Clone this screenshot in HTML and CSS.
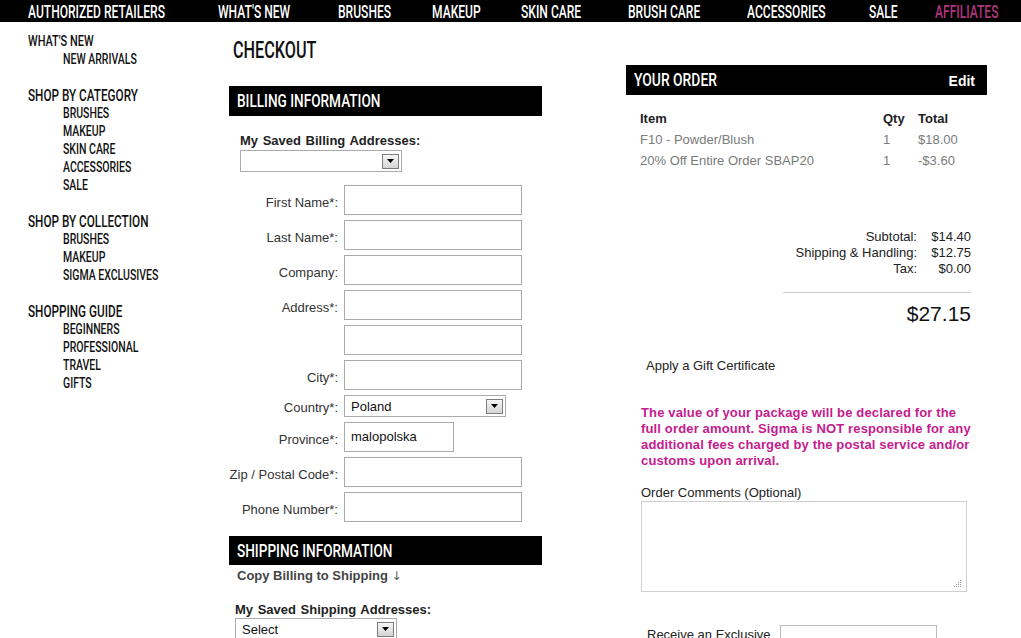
FILE: index.html
```html
<!DOCTYPE html>
<html>
<head>
<meta charset="utf-8">
<title>Checkout</title>
<link rel="stylesheet" href="styles.css">
</head>
<body>
<nav class="nav">
  <a class="nav-item"><span class="c">AUTHORIZED RETAILERS</span></a>
  <a class="nav-item"><span class="c">WHAT'S NEW</span></a>
  <a class="nav-item"><span class="c">BRUSHES</span></a>
  <a class="nav-item"><span class="c">MAKEUP</span></a>
  <a class="nav-item"><span class="c">SKIN CARE</span></a>
  <a class="nav-item"><span class="c">BRUSH CARE</span></a>
  <a class="nav-item"><span class="c">ACCESSORIES</span></a>
  <a class="nav-item"><span class="c">SALE</span></a>
  <a class="nav-item nav-pink"><span class="c">AFFILIATES</span></a>
</nav>
<div class="page">
  <aside class="sidebar">
    <div class="group">
      <div class="head head-sm"><span class="c">WHAT'S NEW</span></div>
      <div class="sub"><span class="c">NEW ARRIVALS</span></div>
    </div>
    <div class="group">
      <div class="head"><span class="c">SHOP BY CATEGORY</span></div>
      <div class="sub"><span class="c">BRUSHES</span></div>
      <div class="sub"><span class="c">MAKEUP</span></div>
      <div class="sub"><span class="c">SKIN CARE</span></div>
      <div class="sub"><span class="c">ACCESSORIES</span></div>
      <div class="sub"><span class="c">SALE</span></div>
    </div>
    <div class="group">
      <div class="head"><span class="c">SHOP BY COLLECTION</span></div>
      <div class="sub"><span class="c">BRUSHES</span></div>
      <div class="sub"><span class="c">MAKEUP</span></div>
      <div class="sub"><span class="c">SIGMA EXCLUSIVES</span></div>
    </div>
    <div class="group">
      <div class="head"><span class="c">SHOPPING GUIDE</span></div>
      <div class="sub"><span class="c">BEGINNERS</span></div>
      <div class="sub"><span class="c">PROFESSIONAL</span></div>
      <div class="sub"><span class="c">TRAVEL</span></div>
      <div class="sub"><span class="c">GIFTS</span></div>
    </div>
  </aside>

  <main class="main">
    <h1 class="title"><span class="c">CHECKOUT</span></h1>
    <div class="bar"><span class="c">BILLING INFORMATION</span></div>
    <div class="saved-label">My Saved Billing Addresses:</div>
    <div class="select select-saved">
      <span class="select-text"></span>
      <span class="select-arrow"><svg width="7" height="4" viewBox="0 0 7 4"><polygon points="0,0 7,0 3.5,4" fill="#000"/></svg></span>
    </div>

    <div class="form">
      <div class="row"><span class="label">First Name*:</span><span class="field"></span></div>
      <div class="row"><span class="label">Last Name*:</span><span class="field"></span></div>
      <div class="row"><span class="label">Company:</span><span class="field"></span></div>
      <div class="row"><span class="label">Address*:</span><span class="field"></span></div>
      <div class="row"><span class="label"></span><span class="field"></span></div>
      <div class="row"><span class="label">City*:</span><span class="field"></span></div>
      <div class="row row-select"><span class="label">Country*:</span>
        <div class="select select-country">
          <span class="select-text">Poland</span>
          <span class="select-arrow"><svg width="7" height="4" viewBox="0 0 7 4"><polygon points="0,0 7,0 3.5,4" fill="#000"/></svg></span>
        </div>
      </div>
      <div class="row"><span class="label">Province*:</span><span class="field field-short">malopolska</span></div>
      <div class="row"><span class="label">Zip / Postal Code*:</span><span class="field"></span></div>
      <div class="row"><span class="label">Phone Number*:</span><span class="field"></span></div>
    </div>

    <div class="bar bar-ship"><span class="c">SHIPPING INFORMATION</span></div>
    <div class="copy">Copy Billing to Shipping <span class="down">↓</span></div>
    <div class="saved-label saved-ship">My Saved Shipping Addresses:</div>
    <div class="select select-ship">
      <span class="select-text">Select</span>
      <span class="select-arrow"><svg width="7" height="4" viewBox="0 0 7 4"><polygon points="0,0 7,0 3.5,4" fill="#000"/></svg></span>
    </div>
  </main>

  <section class="order">
    <div class="order-bar">
      <span class="order-title"><span class="c">YOUR ORDER</span></span>
      <span class="edit">Edit</span>
    </div>
    <div class="items">
      <span class="ih">Item</span><span class="ih">Qty</span><span class="ih">Total</span>
      <span>F10 - Powder/Blush</span><span>1</span><span>$18.00</span>
      <span>20% Off Entire Order SBAP20</span><span>1</span><span>-$3.60</span>
    </div>
    <div class="totals">
      <span>Subtotal:</span><span>$14.40</span>
      <span>Shipping &amp; Handling:</span><span>$12.75</span>
      <span>Tax:</span><span>$0.00</span>
    </div>
    <div class="rule"></div>
    <div class="grand">$27.15</div>
    <div class="gift">Apply a Gift Certificate</div>
    <p class="notice">The value of your package will be declared for the<br>full order amount. Sigma is NOT responsible for any<br>additional fees charged by the postal service and/or<br>customs upon arrival.</p>
    <div class="comments-label">Order Comments (Optional)</div>
    <div class="comments">
      <svg class="grip" width="7" height="7" viewBox="0 0 7 7"><g fill="#999"><rect x="6" y="0" width="1" height="1"/><rect x="4" y="2" width="1" height="1"/><rect x="6" y="2" width="1" height="1"/><rect x="2" y="4" width="1" height="1"/><rect x="4" y="4" width="1" height="1"/><rect x="6" y="4" width="1" height="1"/><rect x="0" y="6" width="1" height="1"/><rect x="2" y="6" width="1" height="1"/><rect x="4" y="6" width="1" height="1"/><rect x="6" y="6" width="1" height="1"/></g></svg>
    </div>
    <div class="exclusive">
      <span class="ex-label">Receive an Exclusive</span>
      <span class="ex-field"></span>
    </div>
  </section>
</div>
</body>
</html>
```

FILE: styles.css
```css
html, body {
  margin: 0;
  padding: 0;
  background: #fff;
}
body {
  font-family: "Liberation Sans", Arial, sans-serif;
  font-size: 13px;
  color: #222;
  overflow: hidden;
}
.c {
  display: inline-block;
  white-space: nowrap;
  transform: scaleX(var(--sx, 0.7));
  transform-origin: 0 50%;
}

/* top navigation */
.nav {
  display: grid;
  grid-template-columns: 190px 120px 94px 89px 107px 119px 122px 66px 1fr;
  align-items: start;
  height: 22px;
  padding-left: 28px;
  background: #000;
  overflow: hidden;
}
.nav-item {
  font-family: Roboto, sans-serif;
  font-weight: 500;
  font-size: 19px;
  line-height: 24px;
  color: #fff;
  white-space: nowrap;
  --sx: 0.635;
}
.nav-pink {
  color: #b0357f;
}

.page {
  display: flex;
  align-items: flex-start;
}

/* sidebar */
.sidebar {
  width: 201px;
  padding: 10px 0 0 28px;
  font-family: Roboto, sans-serif;
  font-weight: 500;
  line-height: 18px;
  color: #111;
}
.group + .group {
  margin-top: 18px;
}
.head {
  font-size: 17px;
  --sx: 0.69;
}
.head-sm {
  font-size: 15px;
  --sx: 0.73;
}
.sub {
  font-size: 15px;
  padding-left: 35px;
  --sx: 0.70;
}

/* main column */
.main {
  width: 313px;
  padding-top: 14px;
}
.title {
  margin: 0 0 22px 4px;
  font-family: Roboto, sans-serif;
  font-weight: 500;
  font-size: 23.5px;
  line-height: 28px;
  color: #111;
  --sx: 0.69;
}
.bar {
  height: 30px;
  padding-left: 8px;
  background: #000;
  color: #fff;
  font-family: Roboto, sans-serif;
  font-weight: 500;
  font-size: 18px;
  line-height: 30px;
  --sx: 0.755;
}
.bar-ship {
  margin-top: 14px;
  height: 29px;
  line-height: 29px;
}
.saved-label {
  margin: 17px 0 1px 11px;
  font-weight: bold;
  line-height: 16px;
  color: #222;
  word-spacing: 1px;
}
.saved-ship {
  margin: 18px 0 0 6px;
  line-height: 15px;
}
.select {
  display: flex;
  align-items: center;
  justify-content: space-between;
  box-sizing: border-box;
  width: 162px;
  height: 22px;
  padding: 0 2px 0 6px;
  border: 1px solid #ababab;
  background: #fff;
  font-size: 13px;
  color: #111;
}
.select-saved {
  margin-left: 11px;
}
.select-ship {
  margin-left: 6px;
  margin-top: 1px;
}
.select-arrow {
  display: flex;
  align-items: center;
  justify-content: center;
  box-sizing: border-box;
  width: 17px;
  height: 15px;
  border: 1px solid #7d7d7d;
  background: linear-gradient(#f6f6f6, #d4d4d4);
}

.form {
  display: flex;
  flex-direction: column;
  gap: 5px;
  margin-top: 13px;
}
.row {
  display: flex;
  align-items: flex-start;
}
.label {
  width: 109px;
  margin-right: 6px;
  padding-top: 10px;
  text-align: right;
  line-height: 16px;
  color: #333;
  white-space: nowrap;
}
.row-select .label {
  padding-top: 5px;
}
.field {
  display: block;
  box-sizing: border-box;
  width: 178px;
  height: 30px;
  border: 1px solid #aaa;
  background: #fff;
}
.field-short {
  width: 110px;
  padding-left: 6px;
  line-height: 28px;
  color: #111;
}
.copy {
  margin: 3px 0 0 8px;
  font-weight: bold;
  line-height: 16px;
  color: #444;
}
.down {
  font-family: "DejaVu Sans", sans-serif;
  font-weight: normal;
  font-size: 12px;
  color: #555;
}

/* order column */
.order {
  width: 361px;
  margin: 43px 0 0 84px;
}
.order-bar {
  display: flex;
  justify-content: space-between;
  height: 30px;
  padding: 0 12px 0 8px;
  background: #000;
  color: #fff;
}
.order-title {
  font-family: Roboto, sans-serif;
  font-weight: 500;
  font-size: 18px;
  line-height: 29px;
  --sx: 0.77;
}
.edit {
  padding-top: 1px;
  font-weight: bold;
  font-size: 14px;
  line-height: 30px;
}
.items {
  display: grid;
  grid-template-columns: 243px 35px 1fr;
  margin-top: 13px;
  padding-left: 14px;
  line-height: 21px;
  color: #7a7a7a;
}
.ih {
  font-weight: bold;
  color: #222;
}
.totals {
  display: grid;
  grid-template-columns: auto 46px;
  column-gap: 8px;
  justify-content: end;
  margin-top: 58px;
  padding-right: 16px;
  text-align: right;
  line-height: 16px;
  color: #222;
}
.rule {
  width: 188px;
  height: 1px;
  margin: 15px 16px 0 auto;
  background: #ccc;
}
.grand {
  margin-top: 9px;
  padding-right: 16px;
  text-align: right;
  font-size: 21px;
  line-height: 24px;
  color: #111;
}
.gift {
  margin-top: 32px;
  padding-left: 20px;
  line-height: 16px;
}
.notice {
  width: 350px;
  margin: 31px 0 0 15px;
  font-weight: bold;
  line-height: 16px;
  color: #c51b8d;
  letter-spacing: 0.15px;
  white-space: nowrap;
}
.comments-label {
  margin: 16px 0 0 15px;
  line-height: 16px;
}
.comments {
  display: flex;
  align-items: flex-end;
  justify-content: flex-end;
  box-sizing: border-box;
  width: 326px;
  height: 91px;
  margin: 0 0 0 15px;
  padding: 0 5px 4px 0;
  border: 1px solid #cfcfcf;
}
.exclusive {
  display: flex;
  align-items: flex-start;
  margin-top: 33px;
  padding-left: 21px;
}
.ex-label {
  width: 133px;
  padding-top: 2px;
  line-height: 16px;
}
.ex-field {
  display: block;
  box-sizing: border-box;
  width: 157px;
  height: 30px;
  border: 1px solid #bbb;
}
```
